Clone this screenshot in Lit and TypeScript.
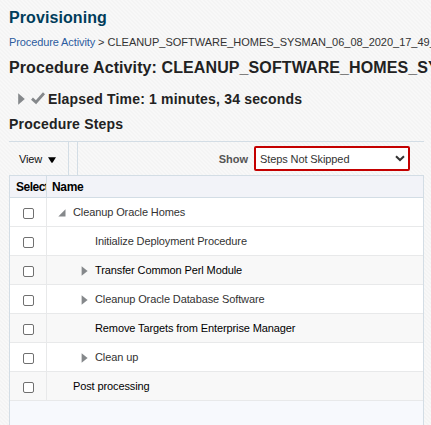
import { LitElement, html, css, svg, nothing } from "lit";
import { customElement } from "lit/decorators.js";
import { classMap } from "lit/directives/class-map.js";

interface Step {
  name: string;
  level: number;
  marker?: "open" | "closed";
  strong?: boolean;
}

const STEPS: Step[] = [
  { name: "Cleanup Oracle Homes", level: 1, marker: "open" },
  { name: "Initialize Deployment Procedure", level: 2 },
  { name: "Transfer Common Perl Module", level: 2, marker: "closed", strong: true },
  { name: "Cleanup Oracle Database Software", level: 2, marker: "closed" },
  { name: "Remove Targets from Enterprise Manager", level: 2, strong: true },
  { name: "Clean up", level: 2, marker: "closed" },
  { name: "Post processing", level: 1, strong: true },
];

const marker = (kind?: string) =>
  kind === "open"
    ? html`<svg width="8" height="8" viewBox="0 0 8 8">${svg`<path d="M7.5 0.3V7.5H0.3Z" fill="#85888b"/>`}</svg>`
    : kind === "closed"
      ? html`<svg width="8" height="10" viewBox="0 0 8 10">${svg`<path d="M1.6 0.2L7.6 5L1.6 9.8Z" fill="#85888b"/>`}</svg>`
      : nothing;

@customElement("app-root")
export class AppRoot extends LitElement {
  static styles = css`
    :host {
      display: block;
      width: 431px;
      height: 425px;
      overflow: hidden;
      box-sizing: border-box;
      padding-left: 9px;
      font: 11px/14px "Liberation Sans", Arial, sans-serif;
      letter-spacing: -0.11px;
      color: #333;
      white-space: nowrap;
      background: repeating-linear-gradient(45deg, #f4f4f4 0 1.414px, #f8f8f8 1.414px 2.828px);
    }
    svg { display: block; flex: none; }
    h1, h2, h3 { margin: 0; font-weight: bold; color: #222; }
    .app { height: 34px; padding-top: 8px; box-sizing: border-box; font-size: 16px; line-height: 20px; letter-spacing: 0.08px; color: #003d5b; }
    .crumbs { height: 20px; line-height: 17px; letter-spacing: -0.02px; }
    .link { color: #2c5c9f; letter-spacing: -0.11px; }
    .title { height: 32px; padding-top: 3px; box-sizing: border-box; font-size: 16px; line-height: 21px; letter-spacing: 0.1px; }
    .elapsed { display: flex; height: 26px; line-height: 26px; font-size: 14px; letter-spacing: 0.18px; }
    .elapsed .arrow { margin: 7px 6px 0 9px; }
    .elapsed .check { margin: 6px 3px 0 0; }
    .steps { height: 29px; font-size: 14px; line-height: 24px; letter-spacing: 0.2px; }
    .toolbar {
      display: flex; width: 415px; height: 34px; box-sizing: border-box;
      border-top: 1px solid #d3dde5;
    }
    .view {
      display: flex; width: 59px; padding: 10px 0 0 10px; box-sizing: border-box;
      line-height: 14px; color: #111; gap: 6px;
    }
    .view svg { margin-top: 5px; }
    .gap { width: 8px; border: solid #d3dde5; border-width: 0 1px; }
    .show { margin-left: auto; padding: 10px 6px 0 0; font-weight: bold; letter-spacing: 0; color: #555; }
    .select {
      display: flex; justify-content: space-between; width: 156px; height: 25px; margin: 4px 14px 0 0;
      box-sizing: border-box; border: 2px solid #c40000; border-radius: 2px; background: #fff;
      padding: 4px 3px 0 4px; line-height: 14px; letter-spacing: -0.1px;
    }
    .select svg { margin-top: 3px; }
    .table {
      width: 415px; height: 251px; box-sizing: border-box; border: 1px solid #d3dde5;
      background: #f7f9fd;
    }
    .row { display: grid; grid-template-columns: 37px 1fr; height: 29px; box-sizing: border-box; border-bottom: 1px solid #e8e9ea; background: #fff; }
    .row.alt { background: #f8f8f8; }
    .row.head { height: 22px; background: #f2f3f8; border-color: #d3dde5; font-weight: bold; font-size: 12px; line-height: 22px; letter-spacing: -0.35px; color: #000; }
    .cell { border-right: 1px solid #e8e9ea; overflow: hidden; }
    .head .cell { border-color: #d3dde5; padding-left: 6px; letter-spacing: -0.5px; }
    .head .name { padding-left: 5px; }
    .box { width: 11px; height: 11px; box-sizing: border-box; border: 1px solid #707070; border-radius: 2px; margin: 10px 0 0 13px; background: #fff; }
    .item { display: flex; padding-left: 11px; line-height: 28px; }
    .item.deep { padding-left: 33px; }
    .item.strong { color: #000; }
    .slot { width: 15px; padding-top: 10px; flex: none; line-height: 0; }
    .slot.open { padding-top: 11px; }
  `;

  render() {
    return html`
      <h1 class="app"><span>Provisioning</span></h1>
      <div class="crumbs"><span class="link">Procedure Activity</span> &gt; CLEANUP_SOFTWARE_HOMES_SYSMAN_06_08_2020_17_49_36</div>
      <h2 class="title">Procedure Activity: CLEANUP_SOFTWARE_HOMES_SYSMAN_06_08</h2>
      <h3 class="elapsed">
        <svg class="arrow" width="7" height="12" viewBox="0 0 7 12"><path d="M0.2 0.2L6.8 6L0.2 11.8Z" fill="#85888b" /></svg>
        <svg class="check" width="14" height="13" viewBox="0 0 14 13"><path d="M1 6.6L5 10.3L13 1.3" fill="none" stroke="#85888b" stroke-width="2.8" /></svg>
        <span>Elapsed Time: 1 minutes, 34 seconds</span>
      </h3>
      <h3 class="steps">Procedure Steps</h3>
      <div class="toolbar">
        <div class="view"><span>View</span><svg width="8" height="6" viewBox="0 0 8 6"><path d="M0 0.3H8L4.5 5.8H3.5Z" fill="#000" /></svg></div>
        <div class="gap"></div>
        <div class="show">Show</div>
        <div class="select">
          <span>Steps Not Skipped</span>
          <svg width="10" height="7" viewBox="0 0 10 7"><path d="M1 1.2L5 5L9 1.2" fill="none" stroke="#333" stroke-width="2" /></svg>
        </div>
      </div>
      <div class="table">
        <div class="row head"><div class="cell">Select</div><div class="name">Name</div></div>
        ${STEPS.map(
          (s, i) => html`<div class=${classMap({ row: true, alt: i % 2 === 0 && i > 0 })}>
            <div class="cell"><div class="box"></div></div>
            <div class=${classMap({ item: true, deep: s.level === 2, strong: !!s.strong })}>
              <div class=${classMap({ slot: true, open: s.marker === "open" })}>${marker(s.marker)}</div>
              <span>${s.name}</span>
            </div>
          </div>`
        )}
      </div>
    `;
  }
}
